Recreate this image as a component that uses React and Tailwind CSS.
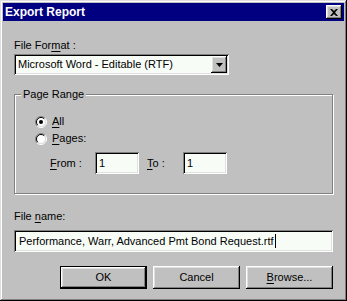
import React from "react";

const raised =
  "shadow-[inset_-1px_-1px_#000000,inset_1px_1px_#ffffff,inset_-2px_-2px_#808080,inset_2px_2px_#dfdfdf]";
const sunken =
  "shadow-[inset_1px_1px_#808080,inset_-1px_-1px_#ffffff,inset_2px_2px_#000000,inset_-2px_-2px_#dfdfdf]";

function U({ children }) {
  return <span className="underline underline-offset-[2px] decoration-[1px]">{children}</span>;
}

function Radio({ checked }) {
  return (
    <svg width="12" height="12" viewBox="0 0 12 12" className="shrink-0">
      <circle cx="6" cy="6" r="4.5" fill="#ffffff" />
      <path d="M 2.1 9.9 A 5.5 5.5 0 0 1 9.9 2.1" stroke="#808080" strokeWidth="1" fill="none" />
      <path d="M 9.9 2.1 A 5.5 5.5 0 0 1 2.1 9.9" stroke="#ffffff" strokeWidth="1" fill="none" />
      <path d="M 2.8 9.2 A 4.5 4.5 0 0 1 9.2 2.8" stroke="#000000" strokeWidth="1" fill="none" />
      <path d="M 9.2 2.8 A 4.5 4.5 0 0 1 2.8 9.2" stroke="#dfdfdf" strokeWidth="1" fill="none" />
      {checked && <circle cx="6" cy="6" r="2" fill="#000000" />}
    </svg>
  );
}

function Field({ className, children }) {
  return (
    <div className={`bg-[#f7fcf7] ${sunken} flex items-center h-[22px] pl-[4px] ${className}`}>
      {children}
    </div>
  );
}

function Button({ children, def }) {
  if (def) {
    return (
      <div className="w-[87px] h-[23px] bg-black p-[1px]">
        <div className={`w-full h-full bg-[#c0c0c0] ${raised} flex items-center justify-center`}>
          {children}
        </div>
      </div>
    );
  }
  return (
    <div className={`w-[87px] h-[23px] bg-[#c0c0c0] ${raised} flex items-center justify-center`}>
      {children}
    </div>
  );
}

export default function App() {
  return (
    <div
      className="w-[347px] h-[301px] bg-[#c0c0c0] text-black text-[11px] leading-[13px] p-[3px] shadow-[inset_-1px_-1px_#000000,inset_1px_1px_#dfdfdf,inset_-2px_-2px_#808080,inset_2px_2px_#ffffff] flex flex-col"
      style={{ fontFamily: '"Liberation Sans", Arial, sans-serif' }}
    >
      {/* Title bar */}
      <div className="h-[18px] bg-[#000080] flex items-center justify-between pl-[2px] pr-[2px]">
        <span className="text-white font-bold text-[12px]">Export Report</span>
        <div className={`w-[16px] h-[14px] bg-[#c0c0c0] ${raised} flex items-center justify-center`}>
          <svg width="8" height="7" viewBox="0 0 8 7">
            <path d="M0 0h2l2 2 2-2h2v0L5 3.5 8 7H6L4 5 2 7H0l3-3.5z" fill="#000" />
          </svg>
        </div>
      </div>

      <div className="flex flex-col px-[11px]">
        <div className="mt-[18px] h-[13px]">
          File For<U>m</U>at :
        </div>
        <div className={`mt-[2px] w-[215px] h-[21px] bg-[#f7fcf7] ${sunken} flex items-center justify-between pl-[4px] pr-[2px]`}>
          <span>Microsoft Word - Editable (RTF)</span>
          <div className={`w-[16px] h-[17px] bg-[#c0c0c0] ${raised} flex items-center justify-center`}>
            <svg width="7" height="4" viewBox="0 0 7 4">
              <path d="M0 0h7L3.5 4z" fill="#000" />
            </svg>
          </div>
        </div>

        {/* Page Range group */}
        <div className="relative mt-[19px] h-[100px] border border-[#808080] shadow-[1px_1px_#ffffff,inset_1px_1px_#ffffff] flex flex-col pl-[20px]">
          <span className="absolute left-[6px] top-[-7px] bg-[#c0c0c0] px-[2px]">Page Range</span>
          <div className="mt-[20px] flex items-center gap-[5px] h-[13px]">
            <Radio checked />
            <span>
              <U>A</U>ll
            </span>
          </div>
          <div className="mt-[4px] flex items-center gap-[5px] h-[13px]">
            <Radio />
            <span>
              <U>P</U>ages:
            </span>
          </div>
          <div className="mt-[7px] flex items-center pl-[15px]">
            <span className="w-[45px]">
              <U>F</U>rom :
            </span>
            <Field className="w-[44px]">1</Field>
            <span className="ml-[8px] w-[36px]">
              <U>T</U>o :
            </span>
            <Field className="w-[44px]">1</Field>
          </div>
        </div>

        <div className="mt-[16px] h-[13px]">
          File <U>n</U>ame:
        </div>
        <Field className="mt-[7px] w-[319px] !pl-[5px]">
          <span>Performance, Warr, Advanced Pmt Bond Request.rtf</span>
          <span className="ml-[1px] w-[1px] h-[14px] bg-black" />
        </Field>

        <div className="mt-[14px] flex justify-end gap-[6px] pr-[0px]">
          <Button def>OK</Button>
          <Button>Cancel</Button>
          <Button>
            <span>
              <U>B</U>rowse...
            </span>
          </Button>
        </div>
      </div>
    </div>
  );
}
